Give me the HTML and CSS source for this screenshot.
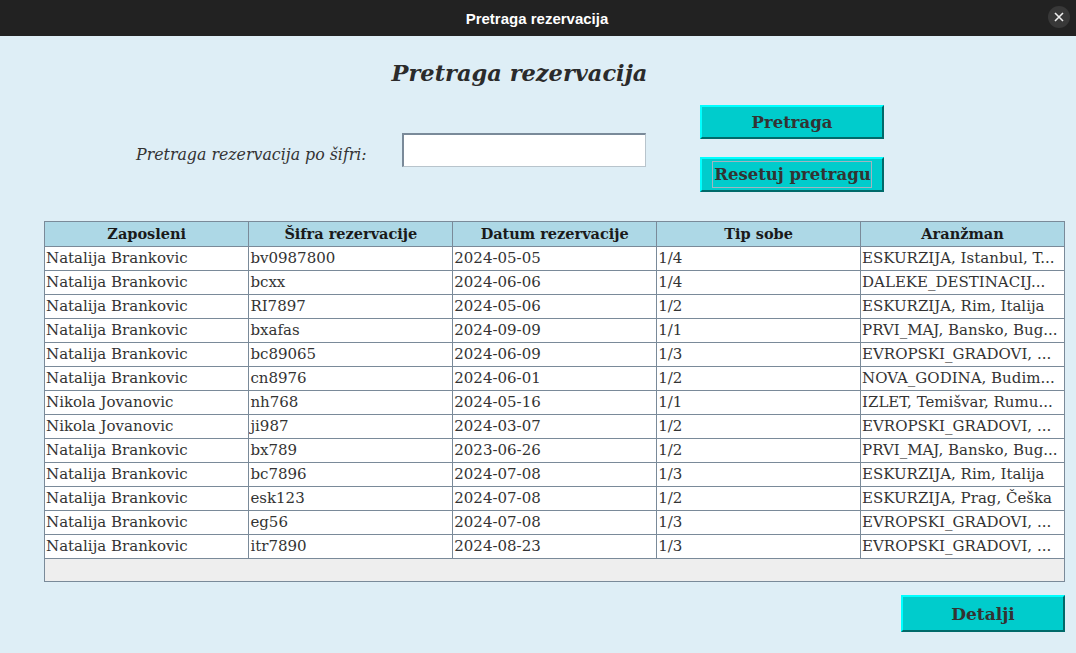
FILE: index.html
```html
<!DOCTYPE html>
<html>
<head>
<meta charset="utf-8">
<link rel="stylesheet" href="styles.css">
</head>
<body>
<div class="titlebar">
  <span class="wtitle">Pretraga rezervacija</span>
  <span class="close"><svg width="10" height="10" viewBox="0 0 10 10"><path d="M1 1L9 9M9 1L1 9" stroke="#eee" stroke-width="1.6"/></svg></span>
</div>
<div class="window">
  <h1 class="heading">Pretraga rezervacija</h1>
  <div class="search">
    <div class="searchrow">
      <label class="lbl">Pretraga rezervacija po šifri:</label>
      <div class="input"></div>
    </div>
    <div class="btns">
      <button class="btn">Pretraga</button>
      <button class="btn"><span class="focus">Resetuj pretragu</span></button>
    </div>
  </div>
  <div class="tablewrap">
    <table class="tbl">
      <thead>
        <tr><th>Zaposleni</th><th>Šifra rezervacije</th><th>Datum rezervacije</th><th>Tip sobe</th><th>Aranžman</th></tr>
      </thead>
      <tbody>
        <tr><td>Natalija Brankovic</td><td>bv0987800</td><td>2024-05-05</td><td>1/4</td><td>ESKURZIJA, Istanbul, T...</td></tr>
        <tr><td>Natalija Brankovic</td><td>bcxx</td><td>2024-06-06</td><td>1/4</td><td>DALEKE_DESTINACIJ...</td></tr>
        <tr><td>Natalija Brankovic</td><td>RI7897</td><td>2024-05-06</td><td>1/2</td><td>ESKURZIJA, Rim, Italija</td></tr>
        <tr><td>Natalija Brankovic</td><td>bxafas</td><td>2024-09-09</td><td>1/1</td><td>PRVI_MAJ, Bansko, Bug...</td></tr>
        <tr><td>Natalija Brankovic</td><td>bc89065</td><td>2024-06-09</td><td>1/3</td><td>EVROPSKI_GRADOVI, ...</td></tr>
        <tr><td>Natalija Brankovic</td><td>cn8976</td><td>2024-06-01</td><td>1/2</td><td>NOVA_GODINA, Budim...</td></tr>
        <tr><td>Nikola Jovanovic</td><td>nh768</td><td>2024-05-16</td><td>1/1</td><td>IZLET, Temišvar, Rumu...</td></tr>
        <tr><td>Nikola Jovanovic</td><td>ji987</td><td>2024-03-07</td><td>1/2</td><td>EVROPSKI_GRADOVI, ...</td></tr>
        <tr><td>Natalija Brankovic</td><td>bx789</td><td>2023-06-26</td><td>1/2</td><td>PRVI_MAJ, Bansko, Bug...</td></tr>
        <tr><td>Natalija Brankovic</td><td>bc7896</td><td>2024-07-08</td><td>1/3</td><td>ESKURZIJA, Rim, Italija</td></tr>
        <tr><td>Natalija Brankovic</td><td>esk123</td><td>2024-07-08</td><td>1/2</td><td>ESKURZIJA, Prag, Češka</td></tr>
        <tr><td>Natalija Brankovic</td><td>eg56</td><td>2024-07-08</td><td>1/3</td><td>EVROPSKI_GRADOVI, ...</td></tr>
        <tr><td>Natalija Brankovic</td><td>itr7890</td><td>2024-08-23</td><td>1/3</td><td>EVROPSKI_GRADOVI, ...</td></tr>
      </tbody>
    </table>
    <div class="filler"></div>
  </div>
  <div class="footer">
    <button class="btn btn-det">Detalji</button>
  </div>
</div>
</body>
</html>
```

FILE: styles.css
```css
html, body {
  margin: 0;
  padding: 0;
  background: #deeef6;
}
body {
  width: 1076px;
  height: 653px;
  overflow: hidden;
  font-family: "DejaVu Serif", serif;
}
.titlebar {
  height: 36px;
  background: #222222;
  display: flex;
  align-items: center;
  justify-content: center;
  position: relative;
}
.wtitle {
  color: #ffffff;
  font-family: "Liberation Sans", sans-serif;
  font-weight: bold;
  font-size: 15px;
  margin-left: -2px;
}
.close {
  position: absolute;
  right: 6px;
  top: 6px;
  width: 22px;
  height: 22px;
  border-radius: 50%;
  background: #383838;
  display: flex;
  align-items: center;
  justify-content: center;
}
.window {
  padding: 0 11px 0 44px;
}
.heading {
  margin: 0;
  padding-top: 22px;
  height: 35px;
  text-align: center;
  font-size: 22.5px;
  font-style: italic;
  font-weight: bold;
  color: #2b2b2b;
  padding-right: 70px;
  line-height: 30px;
}
.search {
  display: flex;
  height: 116px;
  margin-top: 12px;
}
.searchrow {
  display: flex;
  align-items: flex-start;
  margin-left: 92px;
  margin-top: 28px;
  height: 34px;
}
.lbl {
  font-style: italic;
  font-size: 15.8px;
  color: #333;
  width: 266px;
  margin-top: 12px;
  line-height: 20px;
}
.input {
  width: 244px;
  height: 34px;
  background: #fff;
  border-top: 2px solid #7a8a99;
  border-left: 2px solid #7a8a99;
  border-bottom: 1px solid #b8c4cc;
  border-right: 1px solid #b8c4cc;
  box-sizing: border-box;
}
.btns {
  display: flex;
  flex-direction: column;
  gap: 18px;
  margin-left: 54px;
}
.btn {
  width: 184px;
  height: 34px;
  background: #00cccc;
  border-top: 2px solid #00ffff;
  border-left: 2px solid #00ffff;
  border-bottom: 2px solid #006a6a;
  border-right: 2px solid #006a6a;
  box-sizing: border-box;
  font-family: "DejaVu Serif", serif;
  font-weight: bold;
  font-size: 16.5px;
  color: #333333;
  padding: 0;
  display: flex;
  align-items: center;
  justify-content: center;
}
.btns .btn + .btn {
  height: 35px;
  font-size: 16.5px;
}
.focus {
  border: 1px solid #a0b4c0;
  padding: 1px 0 1px 1px;
  line-height: 23px;
}
.tablewrap {
  width: 1021px;
  height: 361px;
  border: 1px solid #7a8a99;
  box-sizing: border-box;
  background: #eeeeee;
  display: flex;
  flex-direction: column;
}
.tbl {
  border-collapse: collapse;
  width: 1020px;
  table-layout: fixed;
  background: #fff;
}
.tbl th, .tbl td {
  border: 1px solid #7a8a99;
  height: 24px;
  padding: 0 1px;
  white-space: nowrap;
  overflow: hidden;
  box-sizing: border-box;
  font-size: 15px;
  color: #333;
}
.tbl tr > :first-child { border-left: none; }
.tbl th {
  background: #add8e6;
  font-weight: bold;
  text-align: center;
  border-top: none;
  height: 24px;
  font-size: 14.5px;
  color: #1a1a1a;
}
.tbl td {
  text-align: left;
}
.filler {
  flex: 1;
}
.footer {
  display: flex;
  justify-content: flex-end;
  margin-top: 13px;
}
.btn-det {
  width: 164px;
  height: 37px;
  font-size: 17px;
}
```
